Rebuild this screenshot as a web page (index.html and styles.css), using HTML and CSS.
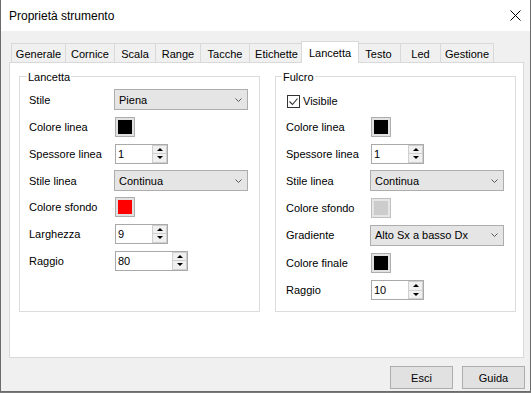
FILE: index.html
```html
<!DOCTYPE html>
<html lang="it">
<head>
<meta charset="utf-8">
<title>Proprietà strumento</title>
<link rel="stylesheet" href="styles.css">
</head>
<body>
<div class="window">
  <div class="titlebar">
    <span class="title">Proprietà strumento</span>
    <svg class="close" width="11" height="11" viewBox="0 0 11 11"><path d="M0.5 0.5 L10.5 10.5 M10.5 0.5 L0.5 10.5" stroke="#000" stroke-width="1" fill="none"/></svg>
  </div>
  <div class="body">
    <div class="tabs">
      <div class="tab t1">Generale</div>
      <div class="tab t2">Cornice</div>
      <div class="tab t3">Scala</div>
      <div class="tab t4">Range</div>
      <div class="tab t5">Tacche</div>
      <div class="tab t6">Etichette</div>
      <div class="tab t7 active">Lancetta</div>
      <div class="tab t8">Testo</div>
      <div class="tab t9">Led</div>
      <div class="tab t10">Gestione</div>
    </div>
    <div class="panel">
      <div class="group group-left">
        <span class="legend">Lancetta</span>
        <div class="rows rows-left">
          <span class="label">Stile</span>
          <div class="combo"><span>Piena</span><svg class="chev" width="7" height="4" viewBox="0 0 7 4"><polyline points="0.5,0.5 3.5,3.5 6.5,0.5" fill="none" stroke="#5a5a5a" stroke-width="1"/></svg></div>

          <span class="label">Colore linea</span>
          <div class="swatch"><div class="fill black"></div></div>

          <span class="label">Spessore linea</span>
          <div class="spin"><span class="val">1</span><span class="btns"><span class="sb"><i class="up"></i></span><span class="sb"><i class="down"></i></span></span></div>

          <span class="label">Stile linea</span>
          <div class="combo"><span>Continua</span><svg class="chev" width="7" height="4" viewBox="0 0 7 4"><polyline points="0.5,0.5 3.5,3.5 6.5,0.5" fill="none" stroke="#5a5a5a" stroke-width="1"/></svg></div>

          <span class="label">Colore sfondo</span>
          <div class="swatch"><div class="fill red"></div></div>

          <span class="label">Larghezza</span>
          <div class="spin"><span class="val">9</span><span class="btns"><span class="sb"><i class="up"></i></span><span class="sb"><i class="down"></i></span></span></div>

          <span class="label">Raggio</span>
          <div class="spin wide"><span class="val">80</span><span class="btns"><span class="sb"><i class="up"></i></span><span class="sb"><i class="down"></i></span></span></div>
        </div>
      </div>

      <div class="group group-right">
        <span class="legend legend-right">Fulcro</span>
        <div class="rows rows-right">
          <div class="checkrow">
            <span class="check"><svg width="11" height="11" viewBox="0 0 11 11"><polyline points="1.5,5.5 4.5,8.5 9.5,2.5" fill="none" stroke="#333" stroke-width="1.1"/></svg></span>
            <span>Visibile</span>
          </div>

          <span class="label">Colore linea</span>
          <div class="swatch"><div class="fill black"></div></div>

          <span class="label">Spessore linea</span>
          <div class="spin"><span class="val">1</span><span class="btns"><span class="sb"><i class="up"></i></span><span class="sb"><i class="down"></i></span></span></div>

          <span class="label">Stile linea</span>
          <div class="combo"><span>Continua</span><svg class="chev" width="7" height="4" viewBox="0 0 7 4"><polyline points="0.5,0.5 3.5,3.5 6.5,0.5" fill="none" stroke="#5a5a5a" stroke-width="1"/></svg></div>

          <span class="label">Colore sfondo</span>
          <div class="swatch disabled"><div class="fill grey"></div></div>

          <span class="label">Gradiente</span>
          <div class="combo"><span>Alto Sx a basso Dx</span><svg class="chev" width="7" height="4" viewBox="0 0 7 4"><polyline points="0.5,0.5 3.5,3.5 6.5,0.5" fill="none" stroke="#5a5a5a" stroke-width="1"/></svg></div>

          <span class="label">Colore finale</span>
          <div class="swatch"><div class="fill black"></div></div>

          <span class="label">Raggio</span>
          <div class="spin"><span class="val">10</span><span class="btns"><span class="sb"><i class="up"></i></span><span class="sb"><i class="down"></i></span></span></div>
        </div>
      </div>
    </div>
    <div class="buttons">
      <button class="btn">Esci</button>
      <button class="btn">Guida</button>
    </div>
  </div>
</div>
</body>
</html>
```

FILE: styles.css
```css
* { box-sizing: border-box; }
html, body { margin: 0; padding: 0; }
body {
  width: 531px;
  height: 393px;
  overflow: hidden;
  background: #7a7a7a;
  font-family: "Liberation Sans", Arial, sans-serif;
  font-size: 11px;
  color: #000;
}
.window {
  width: 531px;
  height: 392px;
  border: 1px solid #6b6b6b;
  border-top: none;
  background: #f0f0f0;
  display: flex;
  flex-direction: column;
}
.titlebar {
  height: 31px;
  flex: none;
  background: #fff;
  display: flex;
  align-items: center;
  padding-left: 8px;
}
.title { font-size: 12px; flex: 1; }
.close { margin-right: 9px; display: block; }

.body {
  flex: 1;
  padding: 10px 0 0 8px;
  display: flex;
  flex-direction: column;
}
.tabs {
  display: flex;
  align-items: flex-end;
  height: 21px;
  padding-left: 2px;
}
.tab {
  height: 19px;
  border: 1px solid #d9d9d9;
  border-bottom: none;
  background: #f0f0f0;
  display: flex;
  align-items: center;
  justify-content: center;
  padding-top: 2px;
  white-space: nowrap;
}
.tab + .tab { margin-left: -1px; }
.t1 { width: 55px; }
.t2 { width: 50px; }
.t3 { width: 42px; }
.t4 { width: 46px; }
.t5 { width: 50px; }
.t6 { width: 55px; }
.t7 { width: 58px; }
.t8 { width: 45px; }
.t9 { width: 41px; }
.t10 { width: 54px; }
.tab.active {
  height: 22px;
  background: #fff;
  padding-top: 0;
  margin-left: -3px;
  margin-right: -2px;
  margin-bottom: -1px;
  position: relative;
  z-index: 2;
}

.panel {
  width: 515px;
  height: 296px;
  background: #fff;
  border: 1px solid #d9d9d9;
  padding: 13px 0 0 9px;
  display: grid;
  grid-template-columns: 241px 241px;
  column-gap: 15px;
  align-items: start;
}
.group {
  height: 236px;
  border: 1px solid #dcdcdc;
  position: relative;
}
.legend {
  position: absolute;
  top: -6px;
  left: 7px;
  background: #fff;
  padding: 0 1px;
  line-height: 13px;
}
.legend-right { left: 6px; }

.rows {
  display: grid;
  align-items: center;
  justify-items: start;
}
.rows-left {
  padding: 9px 0 0 9px;
  grid-template-columns: 86px auto;
  grid-template-rows: 27px 27px 27px 27px 26px 27px 27px;
}
.rows-right {
  padding: 12px 0 0 10px;
  grid-template-columns: 85px auto;
  grid-template-rows: 24px 27px 27px 27px 27px 28px 28px 26px;
}
.label { white-space: nowrap; }

.checkrow {
  grid-column: 1 / 3;
  display: flex;
  align-items: center;
  gap: 3px;
  padding-left: 1px;
}
.check {
  width: 13px;
  height: 13px;
  border: 1px solid #333;
  background: #fff;
  display: block;
}
.check svg { display: block; }

.combo {
  width: 134px;
  height: 21px;
  margin-left: -1px;
  border: 1px solid #adadad;
  background: #e5e5e5;
  display: flex;
  align-items: center;
  justify-content: space-between;
  padding: 0 5px 0 4px;
}
.chev { display: block; }

.swatch {
  width: 20px;
  height: 20px;
  border: 1px solid #adadad;
  background: #e1e1e1;
  padding: 2px;
}
.fill { width: 100%; height: 100%; }
.black { background: #000; }
.red { background: #ff0000; }
.grey { background: #cccccc; }
.swatch.disabled { border-color: #bfbfbf; background: #e6e6e6; }

.spin {
  width: 53px;
  height: 20px;
  border: 1px solid #a9a9a9;
  background: #fff;
  display: flex;
}
.spin.wide { width: 73px; }
.val {
  flex: 1;
  padding-left: 2px;
  line-height: 18px;
}
.btns {
  width: 15px;
  display: flex;
  flex-direction: column;
}
.sb {
  flex: 1;
  border: 1px solid #cfcfcf;
  background: #f0f0f0;
  display: flex;
  align-items: center;
  justify-content: center;
}
.sb + .sb { border-top: none; }
.up, .down {
  display: block;
  width: 0;
  height: 0;
  border-left: 3px solid transparent;
  border-right: 3px solid transparent;
}
.up { border-bottom: 3px solid #000; }
.down { border-top: 3px solid #000; }

.buttons {
  display: flex;
  justify-content: flex-end;
  gap: 9px;
  margin-top: 8px;
  padding-right: 5px;
}
.btn {
  width: 63px;
  height: 23px;
  border: 1px solid #adadad;
  background: #e1e1e1;
  font: inherit;
  color: #000;
  padding: 0;
  margin: 0;
}
```
